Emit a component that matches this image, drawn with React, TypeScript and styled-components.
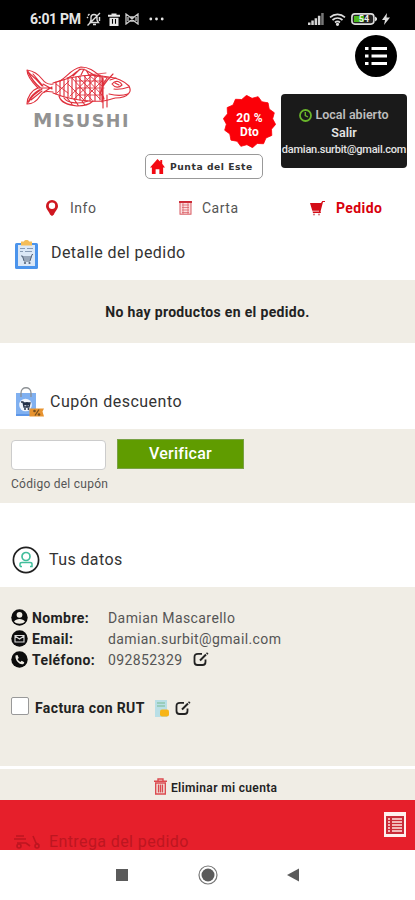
import React from "react";
import styled, { createGlobalStyle } from "styled-components";

const Global = createGlobalStyle`
  *, *::before, *::after { box-sizing: border-box; }
  html, body { margin: 0; padding: 0; background: #fff; }
  body { font-family: Roboto, "Liberation Sans", sans-serif; color: #222; }
  svg { display: block; flex: none; }
`;

const Screen = styled.div`
  width: 415px;
  height: 900px;
  display: flex;
  flex-direction: column;
  background: #fff;
  overflow: hidden;
`;

const Label = styled.span<{ $size: number; $weight?: number; $track?: number; $color?: string }>`
  font-size: ${(p) => p.$size}px;
  font-weight: ${(p) => p.$weight ?? 400};
  letter-spacing: ${(p) => p.$track ?? 0}px;
  color: ${(p) => p.$color ?? "inherit"};
  line-height: 20px;
  white-space: nowrap;
`;

const StatusBar = styled.div`
  flex: none;
  height: 30px;
  padding: 8px 25px 0 30px;
  display: flex;
  justify-content: space-between;
  background: #000;
  color: #e6e6e6;
`;

const StatusGroup = styled.div<{ $gap: number }>`
  display: flex;
  align-items: center;
  height: 22px;
  gap: ${(p) => p.$gap}px;
`;

const Header = styled.header`
  flex: none;
  height: 154px;
  display: grid;
  grid-template-columns: 145px 136px 126px;
`;

const Brand = styled.div`
  padding: 34px 0 0 24px;
`;

const Wordmark = styled.div`
  margin: 1px 0 0 9px;
  height: 20px;
  font: 700 17.5px/20px "DejaVu Sans", sans-serif;
  letter-spacing: 1.5px;
  color: #929292;
  white-space: nowrap;
  &::first-letter { font-size: 19.5px; }
`;

const Middle = styled.div`
  padding-top: 65px;
  display: flex;
  flex-direction: column;
`;

const Discount = styled.div`
  display: grid;
  width: 53px;
  height: 53px;
  margin-left: 78px;
  & > * { grid-area: 1 / 1; }
`;

const DiscountText = styled.div`
  padding-top: 16px;
  display: flex;
  flex-direction: column;
  align-items: center;
  font-size: 12px;
  line-height: 14px;
  font-weight: 700;
  letter-spacing: 0.2px;
  color: #fff;
`;

const Branch = styled.button`
  width: 118px;
  height: 25px;
  margin-top: 6px;
  padding: 0 0 0 4px;
  display: flex;
  align-items: center;
  gap: 5px;
  background: #fff;
  border: 1px solid #999;
  border-radius: 5px;
  font-family: "DejaVu Sans", sans-serif;
  color: #333;
`;

const Account = styled.div`
  display: flex;
  flex-direction: column;
  align-items: center;
`;

const MenuButton = styled.button`
  width: 42px;
  height: 42px;
  margin: 5px 10px 17px auto;
  padding: 0;
  display: grid;
  place-items: center;
  border: 0;
  border-radius: 50%;
  background: #000;
`;

const StatusCard = styled.div`
  width: 126px;
  height: 74px;
  padding-top: 12px;
  display: flex;
  flex-direction: column;
  align-items: center;
  background: #1a1a1a;
  border-radius: 4px;
  color: #e4e4e4;
`;

const CardRow = styled.div<{ $h: number }>`
  height: ${(p) => p.$h}px;
  display: flex;
  align-items: center;
  justify-content: center;
  gap: 3px;
`;

const Tabs = styled.nav`
  flex: none;
  height: 48px;
  display: grid;
  grid-template-columns: 135px 132px 148px;
`;

const Tab = styled.a<{ $active?: boolean; $start: number; $gap: number }>`
  display: flex;
  align-items: center;
  padding-left: ${(p) => p.$start}px;
  gap: ${(p) => p.$gap}px;
  color: ${(p) => (p.$active ? "#d8000c" : "#555")};
`;

const SectionTitle = styled.h2<{ $h: number; $top: number; $left: number; $gap: number }>`
  flex: none;
  margin: 0;
  height: ${(p) => p.$h}px;
  padding: ${(p) => p.$top}px 0 0 ${(p) => p.$left}px;
  display: flex;
  align-items: flex-start;
  gap: ${(p) => p.$gap}px;
  font-weight: 400;
  color: #333;
`;

const TitleText = styled.span<{ $track: number; $top: number }>`
  margin-top: ${(p) => p.$top}px;
  font-size: 16px;
  line-height: 20px;
  letter-spacing: ${(p) => p.$track}px;
`;

const Band = styled.section<{ $h: number }>`
  flex: none;
  height: ${(p) => p.$h}px;
  background: #f0ede5;
`;

const Empty = styled(Band)`
  display: flex;
  align-items: center;
  justify-content: center;
`;

const CouponBand = styled(Band)`
  padding: 10px 11px;
`;

const CouponForm = styled.div`
  display: flex;
  gap: 11px;
  height: 34px;
`;

const CouponInput = styled.input`
  width: 95px;
  height: 30px;
  margin-top: 1px;
  border: 1px solid #ccc;
  border-radius: 4px;
  background: #fff;
`;

const VerifyButton = styled.button`
  width: 127px;
  height: 30px;
  padding: 0;
  border: 1px solid #79a145;
  background: #609c00;
  color: #fff;
  font-family: inherit;
`;

const DataBand = styled(Band)`
  padding: 20px 11px 0;
`;

const DataRow = styled.div`
  display: grid;
  grid-template-columns: 21px 76px auto auto;
  justify-content: start;
  align-items: center;
  height: 21px;
`;

const InvoiceRow = styled.label`
  margin-top: 25px;
  height: 26px;
  display: flex;
  align-items: center;
`;

const Check = styled.span`
  width: 18px;
  height: 18px;
  margin: -5px 6px 0 0;
  border: 1px solid #999;
  border-radius: 2px;
  background: #fff;
`;

const IconSlot = styled.span<{ $left: number }>`
  margin-left: ${(p) => p.$left}px;
`;

const DeleteBand = styled(Band)`
  margin-top: 3px;
  padding: 9px 0 0 154px;
  display: flex;
  gap: 4px;
`;

const BottomBar = styled.div`
  flex: none;
  height: 50px;
  padding: 0 9px 0 13px;
  display: flex;
  justify-content: space-between;
  background: #e61f2b;
  overflow: hidden;
`;

const Ghost = styled.div`
  display: flex;
  gap: 8px;
  padding-top: 32px;
  color: #bd1620;
`;

const ListButton = styled.button`
  width: 22px;
  height: 25px;
  margin-top: 12px;
  padding: 0;
  border: 0;
  background: #fff0ee;
  display: grid;
  place-items: center;
`;

const SystemNav = styled.div`
  flex: none;
  height: 50px;
  padding-left: 115px;
  display: flex;
  align-items: center;
`;

const BellOff = () => (
  <svg width="16" height="16" viewBox="0 0 16 16" fill="none" stroke="#ddd" strokeWidth="1.4">
    <path d="M4 11.5h8.5L11 9V6.500a3 3 0 0 0-6 0V9zM7 13.500h3M1.500 14.500 14 2M2 6l-1 1M13.500 6v4M3.500 3l-1.500 1.500" />
  </svg>
);

const TrashWhite = () => (
  <svg width="12" height="13" viewBox="0 0 12 14" preserveAspectRatio="none">
    <path d="M0 2h3.500V.5h5V2H12v2H0zM1.500 5h9v9h-9z" fill="#e8e8e8" />
    <path d="M4.500 6.500v5M7.500 6.500v5" stroke="#000" strokeWidth="1.1" />
  </svg>
);

const Bow = () => (
  <svg width="14" height="12" viewBox="0 0 14 12" fill="none" stroke="#ccc" strokeWidth="1.3">
    <path d="M1 1v10l4-3h4l4 3V1L9 4H5zM3 4v4M11 4v4M5 4l4 4M9 4 5 8" />
  </svg>
);

const Dots = () => (
  <svg width="15" height="4" viewBox="0 0 15 4" fill="#e5e5e5">
    <circle cx="1.800" cy="2" r="1.400" /><circle cx="7.500" cy="2" r="1.400" /><circle cx="13.200" cy="2" r="1.400" />
  </svg>
);

const Signal = () => (
  <svg width="16" height="12" viewBox="0 0 16 12" fill="#d5d5d5">
    <path d="M0 9.500h2.500V12H0zM3.300 7.500h2.500V12H3.300zM6.600 5.200h2.500V12H6.600zM9.900 2.800h2.500V12H9.900z" />
    <path d="M13.200 0H15.700V12H13.200z" fill="#777" />
  </svg>
);

const Wifi = () => (
  <svg width="17" height="13" viewBox="0 0 17 13" fill="none" stroke="#ddd" strokeWidth="1.700">
    <path d="M1 4.300c4.500-4 10.500-4 15 0M3.500 7c3-2.700 7-2.700 10 0M6 9.500c1.500-1.300 3.500-1.300 5 0" />
    <circle cx="8.500" cy="11.300" r=".8" fill="#ddd" />
  </svg>
);

const BatteryBox = styled.span`
  width: 26px;
  height: 12px;
  display: grid;
  place-items: center;
  & > * { grid-area: 1 / 1; }
`;

const BatteryText = styled.span`
  font-size: 9px;
  line-height: 10px;
  font-weight: 700;
  color: #eee;
`;

const Battery = () => (
  <BatteryBox>
    <svg width="26" height="12" viewBox="0 0 26 12">
      <rect x=".9" y=".9" width="22" height="10.200" rx="3" fill="#222" stroke="#ddd" strokeWidth="1.600" />
      <path d="M3 3h10v6H3z" fill="#4cb81d" />
      <path d="M24 3.500 26 5v2l-2 1.500z" fill="#ddd" />
    </svg>
    <BatteryText>54</BatteryText>
  </BatteryBox>
);

const Bolt = () => (
  <svg width="8" height="12" viewBox="0 0 8 12"><path d="M5 0 0 7h3L2 12l6-7.500H4.500z" fill="#ddd" /></svg>
);

const Fish = () => (
  <svg width="108" height="46" viewBox="0 0 108 46" fill="none" stroke="#df303c" strokeWidth="1.150" strokeLinecap="round" strokeLinejoin="round">
    <path d="M29 20C24 21 21 19 18 15S9 7 3 6c0 6 5 12 11 18C8 26 3 33 3 40c5 0 10-3 13-8s7-5 13-4" />
    <path d="M5 9c5 4 9 8 13 13M5 37c3-5 8-9 13-12M9 10l10 12M7 36l11-9M14 24h14M19 20l9 5M20 28l8-5" />
    <path d="M4 7.500c3 7 7 12 12 16M4.500 38c2-6 6-9 11-12" strokeWidth="1.500" />
    <path d="M29 19C39 16 44 14 51 13M29 29C39 33 50 36 65 37S85 36 91 34c6 0 12-2 14-5 2-2 1-5 0-7-5-5-11-8-20-9-11-2-22-3-34 0" />
    <path d="M36 17C44 12 47 5 57 3c9 0 14 5 19 9M43 14C49 13 52 6 58 5c6 1 9 5 14 7M49 12l7-7M57 11l3-6M65 11l-3-5" />
    <path d="M35 32c2 7 9 9 18 10 8 0 13-2 16-5M40 34c4 6 17 6 24 3M43 34l5 6M50 35l4 6M58 37l3 4" />
    <path d="M32 18v12M36 17v15M40 16v16M44 15v18M48 14v20M52 13v22M56 12v24M61 12v25M66 11v26M71 11v26M76 11v25" />
    <path d="M48 14l20 22M54 13l22 22M60 12l19 20M46 32l21-20M50 35l25-24M59 36l20-20M44 20l15 15M66 12l12 10M32 20l12 9M33 29l12-12" strokeWidth=".9" />
    <path d="M52 17h30M52 24h28M54 31h24M64 11l18-2M70 12l16 2" strokeWidth=".8" />
    <path d="M83 14c-5 6-6 14-3 21M89 10c-7 7-12 14-13 20M79 14v30M83 31v12M78 12v26" />
    <path d="M105 23c-6 2-10 3-15 2M85 30c8 2 13 2 19 0M88 20c4-5 9-2 10 1-3 3-7 3-10-1zM91 19l4 2M86 16l6-2" />
  </svg>
);

const starPoints = Array.from({ length: 28 }, (_, i) => {
  const r = i % 2 ? 23.300 : 26.300;
  const a = (i * Math.PI) / 14 + 0.110;
  return `${(26.500 + r * Math.cos(a)).toFixed(2)},${(26.500 + r * Math.sin(a)).toFixed(2)}`;
}).join(" ");

const Burst = () => (
  <svg width="53" height="53" viewBox="0 0 53 53">
    <polygon points={starPoints} fill="#fb0008" stroke="#fb0008" strokeWidth=".8" strokeLinejoin="round" />
  </svg>
);

const House = () => (
  <svg width="15" height="15" viewBox="0 0 16 16" fill="#f30912">
    <path d="M8 0 11 3V1h2v4l3 4h-2v7h-4v-5H6v5H2V9H0z" />
  </svg>
);

const MenuIcon = () => (
  <svg width="24" height="22" viewBox="0 0 24 22" fill="#fff">
    <path d="M1 2h3.500v3H1zM1 9.500h3.500v3H1zM1 17h3.500v3H1zM7.500 2H23v3H7.500zM7.500 9.500H23v3H7.500zM7.500 17H23v3H7.500z" />
  </svg>
);

const Clock = () => (
  <svg width="13" height="13" viewBox="0 0 13 13" fill="none" stroke="#69b52b" strokeWidth="1.800">
    <circle cx="6.500" cy="6.500" r="5.500" /><path d="M6.300 3v3.500L9 8" strokeWidth="1.400" />
  </svg>
);

const Pin = () => (
  <svg width="12" height="16" viewBox="0 0 12 16">
    <path d="M6 0a6 6 0 0 0-6 6c0 3.500 3 5 4 8.500L6 16l2-1.500C9 11 12 9.500 12 6a6 6 0 0 0-6-6z" fill="#cf1720" />
    <circle cx="6" cy="5.800" r="3.200" fill="#fff" />
  </svg>
);

const MenuCard = () => (
  <svg width="13" height="14" viewBox="0 0 13 14" fill="none" stroke="#d85a62">
    <rect x="1" y=".7" width="11" height="12.500" fill="#fbdede" />
    <path d="M0 1h13" stroke="#c9202c" strokeWidth="1.800" />
    <path d="M3 4h7M3 6.500h7M3 9h7M3 11.500h7M4 2v11M9 2v11" strokeWidth=".7" />
  </svg>
);

const RedCart = () => (
  <svg width="15" height="15" viewBox="0 0 15 15">
    <path d="M0 2h11L12.300 0H15v1h-2l-2.500 9.500L11 12H3l-.5-1.500H9V9.800H2.300z" fill="#d40c17" />
    <circle cx="4" cy="13.500" r="1.100" fill="#d98085" /><circle cx="9" cy="13.500" r="1.100" fill="#d98085" />
  </svg>
);

const Clipboard = () => (
  <svg width="23" height="29" viewBox="0 0 23 29">
    <rect x="0" y="3" width="23" height="26" rx="1.500" fill="#4b94ec" />
    <path d="M3 5h17v21H3z" fill="#dce8f6" />
    <path d="M6 1.500h3c0-2 5-2 5 0h3V5.500H6z" fill="#f5bd58" />
    <path d="M5 8.500h5M12 8.500h6M5 11.500h3M10 11.500h7" stroke="#879bb5" strokeWidth="1.200" />
    <path d="M6 16h1.500l1.500 5h6l2-6.500h1M7.500 17h9M8 19h8" fill="none" stroke="#56667c" strokeWidth="1" />
    <circle cx="10" cy="23" r="1.100" fill="#56667c" /><circle cx="14.500" cy="23" r="1.100" fill="#56667c" />
  </svg>
);

const CouponBag = () => (
  <svg width="29" height="31" viewBox="0 0 29 31">
    <path d="M0 6h20v23H0z" fill="#80b0f0" /><path d="M0 27h16v2H0z" fill="#5d96e8" />
    <path d="M5 10V6c0-7 10-7 10 0v4" fill="none" stroke="#8c9094" strokeWidth="1.300" />
    <circle cx="9.500" cy="18" r="6.300" fill="#f1f5fc" />
    <path d="M5 15h2l1 5h5l1-4H7.500M8 17.500h5M11 15v5" fill="none" stroke="#223048" strokeWidth="1.300" />
    <circle cx="9" cy="22" r="1" fill="#223048" /><circle cx="12.500" cy="22" r="1" fill="#223048" />
    <path d="M13.500 21.500H28l-1.500 3 1.500 5H13.500z" fill="#e7932f" />
    <path d="M23 22.500l-4 6" stroke="#77501f" strokeWidth="1.300" />
    <circle cx="18.500" cy="24" r="1.300" fill="#77501f" /><circle cx="23" cy="27.500" r="1.300" fill="#77501f" />
  </svg>
);

const Person = () => (
  <svg width="28" height="28" viewBox="0 0 28 28" fill="none">
    <circle cx="14" cy="14" r="12.600" stroke="#202020" strokeWidth="1.700" />
    <path d="M8 20.500V18c0-1 1-1.500 2-1.500h8c1 0 2 .5 2 1.500v2.500h-2M8 20.500h2" stroke="#42be9c" strokeWidth="1.500" />
    <circle cx="14" cy="10.500" r="4" stroke="#42be9c" strokeWidth="1.700" />
  </svg>
);

const UserDot = () => (
  <svg width="17" height="17" viewBox="0 0 17 17">
    <circle cx="8.500" cy="8.500" r="8.200" fill="#0c0c0c" />
    <circle cx="8.500" cy="5.800" r="2.900" fill="#f0ede5" />
    <path d="M3 12.500c2-3.500 9-3.500 11 0-2.500 3-8.500 3-11 0z" fill="#f0ede5" />
  </svg>
);

const MailDot = () => (
  <svg width="17" height="17" viewBox="0 0 17 17">
    <circle cx="8.500" cy="8.500" r="8.200" fill="#0c0c0c" />
    <path d="M4 5.500h9v6.500H4zM4 6l4.500 3L13 6" fill="none" stroke="#ddd" strokeWidth="1.100" />
  </svg>
);

const PhoneDot = () => (
  <svg width="17" height="17" viewBox="0 0 17 17">
    <circle cx="8.500" cy="8.500" r="8.200" fill="#0c0c0c" />
    <path d="M4.500 4.500 6.500 4l1.300 3-1.300 1c.7 1.500 1.800 2.500 3 3l1.200-1.200 2.500 1.400c0 1.500-1 2-2 2C7.500 13 4 9 4.500 4.500z" fill="#f0ede5" />
  </svg>
);

const Edit = () => (
  <svg width="16" height="15" viewBox="0 0 16 15" fill="none" stroke="#222" strokeWidth="1.800">
    <path d="M9 1.800H5C2.500 1.800 1.500 3 1.500 5v5c0 2 1 3 3 3h5c2 0 3-1 3-3V7.500" />
    <path d="M7 8.500 13 2.500" strokeWidth="2" /><path d="M13.500.8 15 2.200" strokeWidth="1.400" />
  </svg>
);

const Invoice = () => (
  <svg width="16" height="17" viewBox="0 0 16 17">
    <path d="M1 0h12v17H1z" fill="#b9dfe6" /><path d="M3 3h8M3 6h8" stroke="#8fc7ad" strokeWidth="1.500" />
    <rect x="6" y="9.500" width="9" height="7" rx="2" fill="#f7b416" />
  </svg>
);

const TrashRed = () => (
  <svg width="13" height="17" viewBox="0 0 13 17" fill="none" stroke="#dc4a4f" strokeWidth="1.400">
    <path d="M0 3.300h13M4 2.500V1h5v1.500M1.700 5v11h9.600V5zM4.500 6.500v8M6.500 6.500v8M8.500 6.500v8" />
  </svg>
);

const ListIcon = () => (
  <svg width="18" height="18" viewBox="0 0 18 18">
    <path d="M0 0h18v18H0z" fill="#c92b38" />
    <path d="M2 3h2M6 3h10M2 6h2M6 6h10M2 9h2M6 9h10M2 12h2M6 12h10M2 15h2M6 15h10" stroke="#ffe6e2" strokeWidth="1.600" />
  </svg>
);

const Scooter = () => (
  <svg width="28" height="18" viewBox="0 0 28 18" fill="none" stroke="#bd1620" strokeWidth="1.600">
    <path d="M1 7h12M3 4h8M4 11h9l4 3M20 4l3 7 3 2" /><circle cx="6" cy="14" r="2" /><circle cx="24" cy="14" r="2" />
  </svg>
);

const NavIcons = () => (
  <svg width="190" height="22" viewBox="0 0 190 22">
    <rect x="1" y="5" width="12" height="12" fill="#5b5b5b" />
    <circle cx="93" cy="11" r="9" fill="none" stroke="#777" strokeWidth="1.200" />
    <circle cx="93" cy="11" r="6.500" fill="#5b5b5b" />
    <path d="M172 11 184 4.500v13z" fill="#5b5b5b" />
  </svg>
);

export default function App() {
  return (
    <Screen>
      <Global />
      <StatusBar>
        <StatusGroup $gap={5.5}>
          <Label $size={14} $weight={700} $track={-0.3}>6:01 PM</Label>
          <BellOff /><TrashWhite /><Bow /><IconSlot $left={4}><Dots /></IconSlot>
        </StatusGroup>
        <StatusGroup $gap={5}><Signal /><Wifi /><Battery /><Bolt /></StatusGroup>
      </StatusBar>

      <Header>
        <Brand>
          <Fish />
          <Wordmark>MISUSHI</Wordmark>
        </Brand>
        <Middle>
          <Discount>
            <Burst />
            <DiscountText><span>20 %</span><span>Dto</span></DiscountText>
          </Discount>
          <Branch>
            <House />
            <Label $size={9.2} $weight={700} $track={0.55}>Punta del Este</Label>
          </Branch>
        </Middle>
        <Account>
          <MenuButton aria-label="Menú"><MenuIcon /></MenuButton>
          <StatusCard>
            <CardRow $h={18}><Clock /><Label $size={12.5} $weight={600} $color="#bdbdbd">Local abierto</Label></CardRow>
            <CardRow $h={18}><Label $size={12.5} $weight={600}>Salir</Label></CardRow>
            <CardRow $h={16}><Label $size={11} $weight={500} $track={-0.24}>damian.surbit@gmail.com</Label></CardRow>
          </StatusCard>
        </Account>
      </Header>

      <Tabs>
        <Tab $start={46} $gap={12}><Pin /><Label $size={14} $track={0.5}>Info</Label></Tab>
        <Tab $start={44} $gap={10}><MenuCard /><Label $size={14} $track={0.5}>Carta</Label></Tab>
        <Tab $start={43} $gap={11} $active><RedCart /><Label $size={14} $weight={700} $track={0.4}>Pedido</Label></Tab>
      </Tabs>

      <SectionTitle $h={48} $top={8} $left={15} $gap={13}>
        <Clipboard /><TitleText $track={0.42} $top={3}>Detalle del pedido</TitleText>
      </SectionTitle>
      <Empty $h={63}><Label $size={14} $weight={700} $track={0.33}>No hay productos en el pedido.</Label></Empty>

      <SectionTitle $h={86} $top={44} $left={16} $gap={5}>
        <CouponBag /><TitleText $track={0.5} $top={5}>Cupón descuento</TitleText>
      </SectionTitle>
      <CouponBand $h={74}>
        <CouponForm>
          <CouponInput aria-label="Código del cupón" />
          <VerifyButton><Label $size={16} $weight={500} $track={0.25}>Verificar</Label></VerifyButton>
        </CouponForm>
        <Label $size={12} $color="#555" $track={0.26}>Código del cupón</Label>
      </CouponBand>

      <SectionTitle $h={84} $top={43} $left={12} $gap={9}>
        <Person /><TitleText $track={0.4} $top={4}>Tus datos</TitleText>
      </SectionTitle>
      <DataBand $h={179}>
        <DataRow><UserDot /><Label $size={14} $weight={700} $track={0.4}>Nombre:</Label><Label $size={14} $track={0.42} $color="#555">Damian Mascarello</Label></DataRow>
        <DataRow><MailDot /><Label $size={14} $weight={700} $track={0.4}>Email:</Label><Label $size={14} $track={0.4} $color="#555">damian.surbit@gmail.com</Label></DataRow>
        <DataRow><PhoneDot /><Label $size={14} $weight={700} $track={0.4}>Teléfono:</Label><Label $size={14} $track={0.4} $color="#555">092852329</Label><IconSlot $left={11}><Edit /></IconSlot></DataRow>
        <InvoiceRow>
          <Check /><Label $size={14} $weight={700} $track={0.38}>Factura con RUT</Label>
          <IconSlot $left={9}><Invoice /></IconSlot><IconSlot $left={5}><Edit /></IconSlot>
        </InvoiceRow>
      </DataBand>

      <DeleteBand $h={31}>
        <TrashRed /><Label $size={12} $weight={600} $track={0.35}>Eliminar mi cuenta</Label>
      </DeleteBand>
      <BottomBar>
        <Ghost><Scooter /><Label $size={16} $track={0.4}>Entrega del pedido</Label></Ghost>
        <ListButton aria-label="Lista"><ListIcon /></ListButton>
      </BottomBar>
      <SystemNav><NavIcons /></SystemNav>
    </Screen>
  );
}
